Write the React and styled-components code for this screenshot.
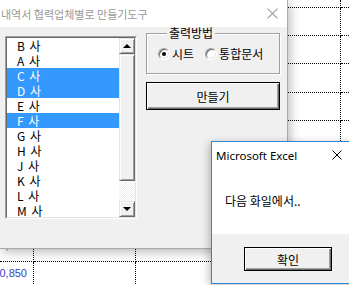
import React from 'react';
import styled, { createGlobalStyle, css } from 'styled-components';

const Global = createGlobalStyle`
  html, body { margin: 0; padding: 0; background: #fff; overflow: hidden; }
  body { width: 349px; height: 285px; }
`;

const KR = `"Noto Sans CJK KR", "Noto Sans", sans-serif`;

const Desktop = styled.div`
  position: relative;
  width: 349px;
  height: 285px;
  overflow: hidden;
  background: #fff;
`;

/* ---------- Excel sheet behind ---------- */
const Sheet = styled.div`
  display: grid;
  grid-template-columns: 34px 102px 103px 102px 102px;
  grid-template-rows: 8px 28px 28px 29px 28px 28px 29px 28px 28px 28px 28px;
`;

const Cell = styled.div`
  box-sizing: border-box;
  border-right: 1px dotted #000;
  border-bottom: 1px dotted #000;
  display: flex;
  justify-content: flex-end;
  align-items: flex-start;
  padding: 4px 6px 0 0;
  font: 11px "Liberation Sans", Arial, sans-serif;
  line-height: 14px;
  color: #3344cc;
  white-space: nowrap;
`;

/* ---------- shared 3D bevels ---------- */
const raised = css`
  box-sizing: border-box;
  background: #f0f0f0;
  border: 1px solid;
  border-color: #e3e3e3 #696969 #696969 #e3e3e3;
  box-shadow: inset 1px 1px 0 #fff, inset -1px -1px 0 #a0a0a0;
`;

/* ---------- UserForm window ---------- */
const UserForm = styled.div`
  position: absolute;
  left: 0;
  top: 0;
  width: 288px;
  height: 249px;
  box-sizing: border-box;
  border-right: 1px solid #a9a9a9;
  border-bottom: 1px solid #a9a9a9;
  display: flex;
  flex-direction: column;
  box-shadow: 2px 3px 10px rgba(0, 0, 0, 0.28);
`;

const FormTitle = styled.div`
  height: 27px;
  flex: none;
  background: #fff;
  display: flex;
  align-items: center;
  justify-content: space-between;
  padding: 0 9px 0 1px;
  font: 11px ${KR};
  color: #999;
  white-space: nowrap;
`;

const FormBody = styled.div`
  flex: 1;
  background: #f0f0f0;
  display: flex;
  align-items: flex-start;
  gap: 9px;
  padding-left: 5px;
`;

const ListBox = styled.div`
  margin-top: 9px;
  width: 132px;
  height: 183px;
  box-sizing: border-box;
  border: 1px solid;
  border-color: #a0a0a0 #fff #fff #a0a0a0;
  display: flex;
`;

const ListInner = styled.div`
  flex: 1;
  display: flex;
  border: 1px solid;
  border-color: #696969 #e3e3e3 #e3e3e3 #696969;
  background: #fff;
  overflow: hidden;
`;

const Items = styled.div`
  flex: 1;
  display: flex;
  flex-direction: column;
`;

const Item = styled.div`
  height: 15px;
  flex: none;
  padding-left: 10px;
  font: 12px ${KR};
  line-height: 15px;
  word-spacing: 2px;
  color: ${p => (p.$sel ? '#fff' : '#000')};
  background: ${p => (p.$sel ? '#3399ff' : 'transparent')};
  white-space: nowrap;
`;

const ScrollBar = styled.div`
  width: 16px;
  flex: none;
  display: flex;
  flex-direction: column;
`;

const ScrollBtn = styled.div`
  ${raised};
  height: 16px;
  flex: none;
  display: flex;
  align-items: center;
  justify-content: center;
`;

const Arrow = styled.span`
  width: 0;
  height: 0;
  border-left: 4px solid transparent;
  border-right: 4px solid transparent;
  ${p => (p.$down ? 'border-top: 4px solid #000;' : 'border-bottom: 4px solid #000;')}
`;

const Thumb = styled.div`
  ${raised};
  height: 127px;
  flex: none;
`;

const Track = styled.div`
  flex: 1;
  background-color: #fff;
  background-image: repeating-conic-gradient(#f0f0f0 0 25%, #fff 0 50%);
  background-size: 2px 2px;
`;

const RightCol = styled.div`
  width: 134px;
  display: flex;
  flex-direction: column;
  gap: 8px;
`;

const Frame = styled.fieldset`
  margin: 0;
  box-sizing: border-box;
  width: 134px;
  height: 47px;
  padding: 8px 0 0 11px;
  border: 1px solid #a0a0a0;
  box-shadow: 1px 1px 0 #fff, inset 1px 1px 0 #fff;
  min-width: 0;
`;

const Legend = styled.legend`
  padding: 0 2px;
  margin-left: 9px;
  font: 12px ${KR};
  line-height: 12px;
  color: #000;
  background: #f0f0f0;
`;

const RadioRow = styled.div`
  display: flex;
  align-items: center;
  gap: 11px;
`;

const RadioOpt = styled.label`
  display: flex;
  align-items: center;
  gap: 2px;
  font: 12px ${KR};
  line-height: 14px;
  color: #000;
`;

const RadioDot = styled.span`
  position: relative;
  width: 12px;
  height: 12px;
  box-sizing: border-box;
  border-radius: 50%;
  background: #fff;
  border: 1px solid;
  border-color: #a0a0a0 #fff #fff #a0a0a0;
  box-shadow: inset 1px 1px 0 #696969, inset -1px -1px 0 #e3e3e3;
  &::after {
    content: '';
    display: ${p => (p.$on ? 'block' : 'none')};
    position: absolute;
    left: 3px;
    top: 3px;
    width: 4px;
    height: 4px;
    border-radius: 50%;
    background: #000;
  }
`;

const DefaultButton = styled.div`
  box-sizing: border-box;
  width: ${p => p.$w}px;
  height: ${p => p.$h}px;
  background: #f0f0f0;
  border: 1px solid #000;
  box-shadow: inset 1px 1px 0 #fff, inset -1px -1px 0 #696969, inset -2px -2px 0 #a0a0a0;
  display: flex;
  align-items: center;
  justify-content: center;
  font: 12px ${KR};
  color: #000;
`;

/* ---------- MsgBox window ---------- */
const MsgBox = styled.div`
  position: absolute;
  left: 211px;
  top: 141px;
  width: 149px;
  height: 143px;
  box-sizing: border-box;
  border: 1px solid #2b86d6;
  background: #fff;
  display: flex;
  flex-direction: column;
  box-shadow: -2px 2px 8px rgba(0, 0, 0, 0.25);
`;

const DlgTitle = styled.div`
  height: 26px;
  flex: none;
  display: flex;
  align-items: center;
  justify-content: space-between;
  padding: 0 17px 0 4px;
  font: 11.5px "Noto Sans", "Open Sans", sans-serif;
  color: #000;
`;

const DlgBody = styled.div`
  flex: 1;
  padding: 25px 0 0 13px;
  font: 12px ${KR};
  line-height: 16px;
  color: #000;
`;

const DlgFooter = styled.div`
  height: 49px;
  flex: none;
  background: #f0f0f0;
  padding: 13px 0 0 32px;
  box-sizing: border-box;
`;

const CloseX = ({ color, size = 10 }) => (
  <svg width={size} height={size} viewBox="0 0 10 10">
    <path d="M0.5 0.5 L9.5 9.5 M9.5 0.5 L0.5 9.5" stroke={color} strokeWidth="1" fill="none" />
  </svg>
);

const items = [
  ['B 사', false],
  ['A 사', false],
  ['C 사', true],
  ['D 사', true],
  ['E 사', false],
  ['F 사', true],
  ['G 사', false],
  ['H 사', false],
  ['J 사', false],
  ['K 사', false],
  ['L 사', false],
  ['M 사', false],
];

const cellText = {
  '9-0': '20,840',
  '10-0': '20,850',
};

export default function App() {
  const cells = [];
  for (let r = 0; r < 11; r++) {
    for (let c = 0; c < 5; c++) {
      cells.push(<Cell key={`${r}-${c}`}>{cellText[`${r}-${c}`] || ''}</Cell>);
    }
  }
  return (
    <>
      <Global />
      <Desktop>
        <Sheet>{cells}</Sheet>

        <UserForm>
          <FormTitle>
            <span>내역서 협력업체별로 만들기도구</span>
            <CloseX color="#9a9a9a" size={11} />
          </FormTitle>
          <FormBody>
            <ListBox>
              <ListInner>
                <Items>
                  {items.map(([t, s]) => (
                    <Item key={t} $sel={s}>{t}</Item>
                  ))}
                </Items>
                <ScrollBar>
                  <ScrollBtn><Arrow /></ScrollBtn>
                  <Thumb />
                  <Track />
                  <ScrollBtn><Arrow $down /></ScrollBtn>
                </ScrollBar>
              </ListInner>
            </ListBox>
            <RightCol>
              <Frame>
                <Legend>출력방법</Legend>
                <RadioRow>
                  <RadioOpt><RadioDot $on />시트</RadioOpt>
                  <RadioOpt><RadioDot />통합문서</RadioOpt>
                </RadioRow>
              </Frame>
              <DefaultButton $w={134} $h={28}>만들기</DefaultButton>
            </RightCol>
          </FormBody>
        </UserForm>

        <MsgBox>
          <DlgTitle>
            <span>Microsoft Excel</span>
            <CloseX color="#000" size={10} />
          </DlgTitle>
          <DlgBody>다음 화일에서..</DlgBody>
          <DlgFooter>
            <DefaultButton $w={88} $h={24}>확인</DefaultButton>
          </DlgFooter>
        </MsgBox>
      </Desktop>
    </>
  );
}
